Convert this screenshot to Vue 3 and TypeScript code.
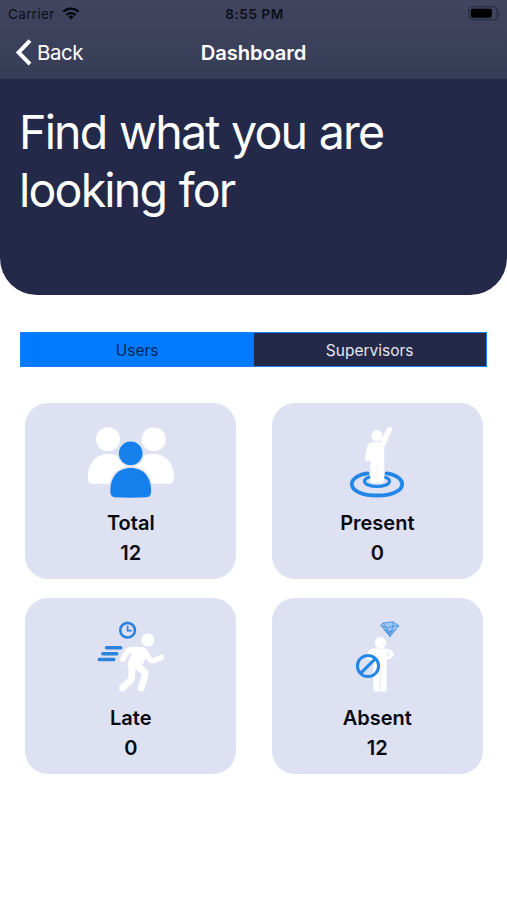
<script setup lang="ts">
import { ref } from 'vue'

type IconName = 'total' | 'present' | 'late' | 'absent'
interface Stat {
  icon: IconName
  label: string
  value: number
}

const tabs: string[] = ['Users', 'Supervisors']
const activeTab = ref<number>(0)
const stats: Stat[] = [
  { icon: 'total', label: 'Total', value: 12 },
  { icon: 'present', label: 'Present', value: 0 },
  { icon: 'late', label: 'Late', value: 0 },
  { icon: 'absent', label: 'Absent', value: 12 },
]
</script>

<template>
  <main class="screen">
    <header class="top">
      <div class="status">
        <div class="carrier">
          <span>Carrier</span>
          <svg class="wifi" viewBox="0 0 18 13" width="18" height="13">
            <g fill="none" stroke="#070910" stroke-width="2.3">
              <path d="M1.3 4.8a11 11 0 0 1 15.4 0" />
              <path d="M4.3 8a6.8 6.8 0 0 1 9.4 0" />
            </g>
            <path d="M6.3 9.8a4 4 0 0 1 5.4 0L9 12.6z" fill="#070910" />
          </svg>
        </div>
        <span class="time">8:55 PM</span>
        <svg class="battery" viewBox="0 0 33 15" width="33" height="15">
          <rect x=".8" y=".8" width="28.4" height="13" rx="3.8" fill="none" stroke="#272b3c" stroke-width="1.1" />
          <rect x="2.8" y="2.8" width="21" height="9" rx="1.8" fill="#000" />
          <path d="M30.6 5.2q2 2.1 0 4.2z" fill="#1c2030" />
        </svg>
      </div>
      <nav class="nav">
        <a class="back">
          <svg viewBox="0 0 17 27" width="17" height="27">
            <path d="M15 1.6 3.6 13.4 15 25.2" fill="none" stroke="#fff" stroke-width="4" />
          </svg>
          <span>Back</span>
        </a>
        <h1 class="title">Dashboard</h1>
      </nav>
    </header>

    <section class="hero">
      <p class="headline">Find what you are<br />looking for</p>
    </section>

    <div class="tabs">
      <button
        v-for="(tab, i) in tabs"
        :key="tab"
        class="tab"
        :class="{ active: i === activeTab }"
        @click="activeTab = i"
      >
        {{ tab }}
      </button>
    </div>

    <section class="grid">
      <article v-for="s in stats" :key="s.label" class="card">
        <svg class="icon" viewBox="0 0 90 74" width="90" height="74">
          <g v-if="s.icon === 'total'">
            <g fill="#fff">
              <circle cx="22" cy="14.3" r="12" />
              <circle cx="67.7" cy="14.3" r="12" />
              <path d="M5.5 58.7Q2 58.7 1.8 53C1.8 39 9 29 22 29S42 36 44 45V58.7z" />
              <path d="M84.2 58.7Q87.7 58.7 87.9 53C87.9 39 80.7 29 67.7 29S47.7 36 45.7 45V58.7z" />
            </g>
            <g fill="#157fec" stroke="#dde1f1" stroke-width="3" paint-order="stroke">
              <circle cx="44.7" cy="28.3" r="11.8" />
              <path d="M28.8 72.3Q24.3 72 24.3 66C24.3 52 32 42.9 44.7 42.9S65.1 52 65.1 66Q65.1 72 60.6 72.3Q44.7 73.1 28.8 72.3z" />
            </g>
          </g>

          <g v-else-if="s.icon === 'present'">
            <g fill="none" stroke="#2486e6" stroke-width="3.8" stroke-linecap="round">
              <path d="M35.5 48.4C26 49.4 19.8 54 19.8 59.2C19.8 66 31 70.5 45 70.5S70.2 66 70.2 59.2C70.2 54 64 49.4 54.5 48.4" />
              <path d="M37 52.2C34 53 32.5 54.5 32.5 56.3C32.5 59.5 38 61.5 45 61.5S57.5 59.5 57.5 56.3C57.5 54.5 56 53 53 52.2" stroke-width="3.2" />
            </g>
            <g fill="#fff">
              <circle cx="45" cy="10.7" r="5.6" />
              <path d="M41 17.3H48L55.1 3.2Q57 .8 59.2 2.1Q60.6 3.4 59.9 5.2L52.3 22V55.5Q52 58.2 48.8 58.2Q46.3 58.2 45.6 57.4Q44.7 58.2 41.8 58.2Q38.5 58.2 38.4 55.5V34Q38 36.6 35.5 36.2Q32.8 35.8 33 33L35 22Q36.3 17.3 41 17.3z" />
              <path d="M45.4 38V55" stroke="#e8ebf5" stroke-width=".6" />
            </g>
          </g>

          <g v-else-if="s.icon === 'late'">
            <g fill="none" stroke="#2b83dc" stroke-linecap="round">
              <circle cx="41.6" cy="10.2" r="7.3" stroke-width="2.6" />
              <path d="M41.6 6.3V10.7H45" stroke-width="1.7" />
              <path d="M20.5 27.7H34.7M16.8 33.7H30.8M13.3 39.6H27.7" stroke-width="3.5" />
            </g>
            <circle cx="61.8" cy="20" r="6.6" fill="#fff" />
            <path
              d="M46.5 29.5H56.5L59.5 33 53.5 45.5 45 47.5 43.8 44.5 48 34z"
              fill="#fff"
              stroke="#fff"
              stroke-width="5"
              stroke-linejoin="round"
            />
            <g fill="none" stroke="#fff" stroke-linecap="round" stroke-linejoin="round">
              <path d="M53 29.5H46Q42.5 29.8 41 32L36.8 39.2" stroke-width="5.6" />
              <path d="M58.5 31 63.3 38.5Q65 41.6 68.5 40.3L75.2 37.4" stroke-width="5.4" />
              <path d="M50 44.5 57.7 51.3Q59.5 53 59 55L55.1 68.1" stroke-width="6.8" />
              <path d="M46.2 46 45.5 58.3Q45.3 59.8 44 61L36.4 68.1" stroke-width="6.8" />
            </g>
          </g>

          <g v-else>
            <g fill="#fff">
              <circle cx="48.4" cy="22.8" r="5.8" />
              <path d="M40 28.5H54Q62 30 62 34.2Q62 38.2 54.7 39.6V69.5Q54.7 71.8 51.8 71.8Q49 71.8 48.3 70.5Q47.4 71.8 44.7 71.8Q41.4 71.8 41.4 69.5V42L34 38Q36 29 40 28.5z" />
            </g>
            <path d="M54.5 33 57.5 34.5 54.5 36.7" fill="none" stroke="#dde1f1" stroke-width="1" />
            <path d="M48.1 48V70" stroke="#dde1f1" stroke-width=".8" />
            <g fill="none" stroke="#2486e6" stroke-width="3">
              <circle cx="36" cy="46" r="10.6" />
              <path d="M28.6 53.4 43.4 38.6" />
            </g>
            <path d="M51 3 61 1.8 67 5.8 58 16.5 48.8 5.5z" fill="#9dc6f2" />
            <g fill="none" stroke="#3d8bdd" stroke-width=".8" stroke-linejoin="round">
              <path d="M51 3 61 1.8 67 5.8 58 16.5 48.8 5.5zM48.8 5.5 55 8.2 61 6.2 67 5.8M51 3 55 8.2 58 16.5 61 6.2 61 1.8M52.5 10.2 61 12M52 9 56 13.5 63.5 9.5" />
            </g>
          </g>
        </svg>
        <h2 class="label">{{ s.label }}</h2>
        <p class="value">{{ s.value }}</p>
      </article>
    </section>
  </main>
</template>

<style>
body {
  margin: 0;
  background: #fff;
}
</style>

<style scoped>
.screen {
  width: 507px;
  height: 900px;
  overflow: hidden;
  background: #fff;
  font-family: Inter, "Liberation Sans", sans-serif;
}
.top {
  height: 79px;
  background: linear-gradient(#42455f, #363c57);
}
.status {
  display: grid;
  grid-template-columns: 1fr auto 1fr;
  align-items: center;
  height: 27px;
  padding: 0 6px 0 8px;
  color: #0c0e18;
  font-size: 13.5px;
}
.carrier {
  display: flex;
  align-items: center;
  gap: 7px;
  letter-spacing: 0.35px;
}
.time {
  font-weight: 600;
  letter-spacing: 0.6px;
}
.battery {
  justify-self: end;
}
.nav {
  display: grid;
  grid-template-columns: 1fr auto 1fr;
  align-items: center;
  height: 51px;
  padding: 0 15px;
  color: #fff;
}
.back {
  display: flex;
  align-items: center;
  gap: 5px;
  font-size: 20.5px;
  letter-spacing: -0.45px;
}
.title {
  margin: 0;
  font-size: 20.2px;
  font-weight: 600;
  letter-spacing: -0.1px;
}
.hero {
  box-sizing: border-box;
  height: 216px;
  padding: 24px 19px 0 19px;
  border-radius: 0 0 37px 37px;
  background: #24294a;
}
.headline {
  margin: 0;
  color: #fff;
  font-size: 46.5px;
  line-height: 58px;
  letter-spacing: -1.8px;
  word-spacing: 1.2px;
  white-space: nowrap;
}
.tabs {
  display: grid;
  grid-template-columns: 1fr 1fr;
  box-sizing: border-box;
  width: 467px;
  height: 35px;
  margin: 37px 0 0 20.4px;
  border: 1px solid #1683f7;
  background: #24294a;
}
.tab {
  padding: 1px 1px 0 0;
  border: 0;
  background: #24294a;
  color: #e4e6ef;
  font-family: inherit;
  font-size: 15.5px;
}
.tab.active {
  background: #007aff;
  color: #0b2550;
}
.grid {
  display: grid;
  grid-template-columns: 211px 211px;
  grid-auto-rows: 176px;
  gap: 18.5px 35.5px;
  margin: 36px 0 0 25.3px;
}
.card {
  display: flex;
  flex-direction: column;
  align-items: center;
  box-sizing: border-box;
  padding-top: 22px;
  border-radius: 23px;
  background: #dde1f1;
  color: #070910;
}
.icon {
  display: block;
}
.label,
.value {
  margin: 0;
  font-size: 20px;
  font-weight: 600;
  line-height: 30px;
}
.label {
  margin-top: 9px;
}
</style>
